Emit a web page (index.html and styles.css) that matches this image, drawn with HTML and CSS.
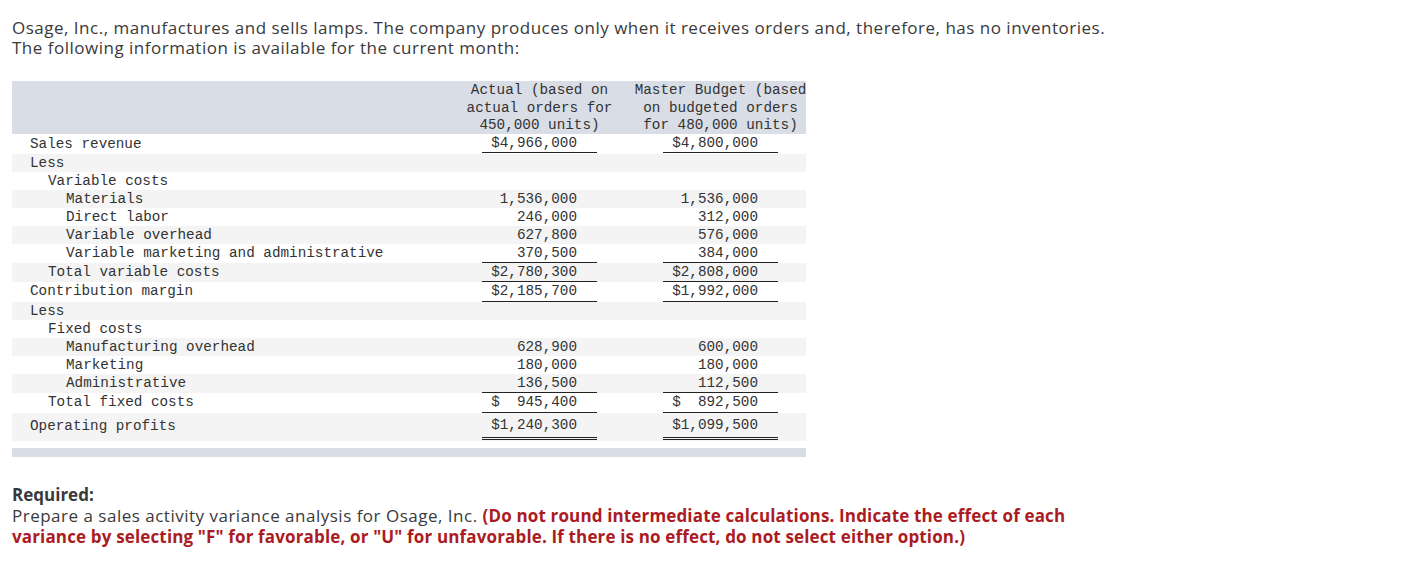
FILE: index.html
```html
<!DOCTYPE html>
<html lang="en">
<head>
<meta charset="utf-8">
<title>Osage, Inc.</title>
<link rel="stylesheet" href="styles.css">
</head>
<body>
<p class="intro">Osage, Inc., manufactures and sells lamps. The company produces only when it receives orders and, therefore, has no inventories.<br>The following information is available for the current month:</p>

<div class="sheet">
  <div class="row head">
    <div class="lab"></div>
    <div class="hd">Actual (based on
actual orders for
450,000 units)</div>
    <div class="sp"></div>
    <div class="hd">Master Budget (based
on budgeted orders
for 480,000 units)</div>
    <div class="sp"></div>
  </div>

  <div class="row first"><div class="lab l0">Sales revenue</div><div class="num ul">$4,966,000</div><div class="sp"></div><div class="num ul">$4,800,000</div><div class="sp"></div></div>
  <div class="row alt"><div class="lab l0">Less</div><div class="num"></div><div class="sp"></div><div class="num"></div><div class="sp"></div></div>
  <div class="row"><div class="lab l1">Variable costs</div><div class="num"></div><div class="sp"></div><div class="num"></div><div class="sp"></div></div>
  <div class="row alt"><div class="lab l2">Materials</div><div class="num">1,536,000</div><div class="sp"></div><div class="num">1,536,000</div><div class="sp"></div></div>
  <div class="row"><div class="lab l2">Direct labor</div><div class="num">246,000</div><div class="sp"></div><div class="num">312,000</div><div class="sp"></div></div>
  <div class="row alt"><div class="lab l2">Variable overhead</div><div class="num">627,800</div><div class="sp"></div><div class="num">576,000</div><div class="sp"></div></div>
  <div class="row u"><div class="lab l2">Variable marketing and administrative</div><div class="num ul">370,500</div><div class="sp"></div><div class="num ul">384,000</div><div class="sp"></div></div>
  <div class="row alt u"><div class="lab l1">Total variable costs</div><div class="num ul">$2,780,300</div><div class="sp"></div><div class="num ul">$2,808,000</div><div class="sp"></div></div>
  <div class="row tall"><div class="lab l0">Contribution margin</div><div class="num ul">$2,185,700</div><div class="sp"></div><div class="num ul">$1,992,000</div><div class="sp"></div></div>
  <div class="row alt"><div class="lab l0">Less</div><div class="num"></div><div class="sp"></div><div class="num"></div><div class="sp"></div></div>
  <div class="row"><div class="lab l1">Fixed costs</div><div class="num"></div><div class="sp"></div><div class="num"></div><div class="sp"></div></div>
  <div class="row alt"><div class="lab l2">Manufacturing overhead</div><div class="num">628,900</div><div class="sp"></div><div class="num">600,000</div><div class="sp"></div></div>
  <div class="row"><div class="lab l2">Marketing</div><div class="num">180,000</div><div class="sp"></div><div class="num">180,000</div><div class="sp"></div></div>
  <div class="row alt u"><div class="lab l2">Administrative</div><div class="num ul">136,500</div><div class="sp"></div><div class="num ul">112,500</div><div class="sp"></div></div>
  <div class="row tall"><div class="lab l1">Total fixed costs</div><div class="num ul">$  945,400</div><div class="sp"></div><div class="num ul">$  892,500</div><div class="sp"></div></div>
  <div class="row alt last"><div class="lab l0">Operating profits</div><div class="num dbl">$1,240,300</div><div class="sp"></div><div class="num dbl">$1,099,500</div><div class="sp"></div></div>
  <div class="foot"></div>
</div>

<div class="req">
  <p class="req-title">Required:</p>
  <p class="req-text">Prepare a sales activity variance analysis for Osage, Inc. <strong class="warn">(Do not round intermediate calculations. Indicate the effect of each variance by selecting "F" for favorable, or "U" for unfavorable. If there is no effect, do not select either option.)</strong></p>
</div>
</body>
</html>
```

FILE: styles.css
```css
html, body {
  margin: 0;
  padding: 0;
  background: #fff;
}

body {
  padding: 18px 12px 0 12px;
  font-family: "Open Sans", "Liberation Sans", sans-serif;
  color: #3a3a3a;
}

.intro {
  margin: 0;
  font-size: 17px;
  line-height: 20px;
  letter-spacing: 0.5px;
}

.sheet {
  width: 794px;
  margin-top: 23px;
  font-family: "Liberation Mono", "DejaVu Sans Mono", monospace;
  font-size: 14.3px;
  color: #333;
}

.row {
  display: grid;
  grid-template-columns: 470px 115px 66px 115px 28px;
  height: 18px;
  line-height: 18px;
  background: #fff;
}

.row.alt {
  background: #f4f4f4;
}

.row.head {
  height: 53px;
  box-sizing: border-box;
  padding-top: 1px;
  line-height: 17.6px;
  background: #d9dde6;
}

.row.first {
  height: 20px;
  line-height: 21px;
}

.row.u {
  height: 19px;
}

.row.tall {
  height: 20px;
}

.row.last {
  height: 28px;
  line-height: 26px;
}

.hd {
  display: flex;
  justify-content: center;
  white-space: pre;
  text-align: center;
}

.lab {
  white-space: nowrap;
}

.l0 { padding-left: 18px; }
.l1 { padding-left: 36px; }
.l2 { padding-left: 54px; }

.num {
  text-align: right;
  padding-right: 20px;
  white-space: pre;
  box-sizing: border-box;
}

.num.ul {
  height: 19px;
  line-height: 18px;
  border-bottom: 1px solid #222;
}

.row.tall .num.ul {
  height: 20px;
  line-height: 19px;
}

.num.dbl {
  height: 27px;
  line-height: 24px;
  border-bottom: 3px double #222;
}

.foot {
  height: 9px;
  margin-top: 7px;
  background: #d9dde6;
}

.req {
  width: 1080px;
  margin-top: 27px;
  font-size: 17px;
  line-height: 21px;
  letter-spacing: 0.5px;
}

.req p {
  margin: 0;
}

.req-title {
  font-weight: 700;
  letter-spacing: 0;
}

.warn {
  color: #ab1b22;
  font-weight: 700;
  letter-spacing: 0.15px;
}
```
